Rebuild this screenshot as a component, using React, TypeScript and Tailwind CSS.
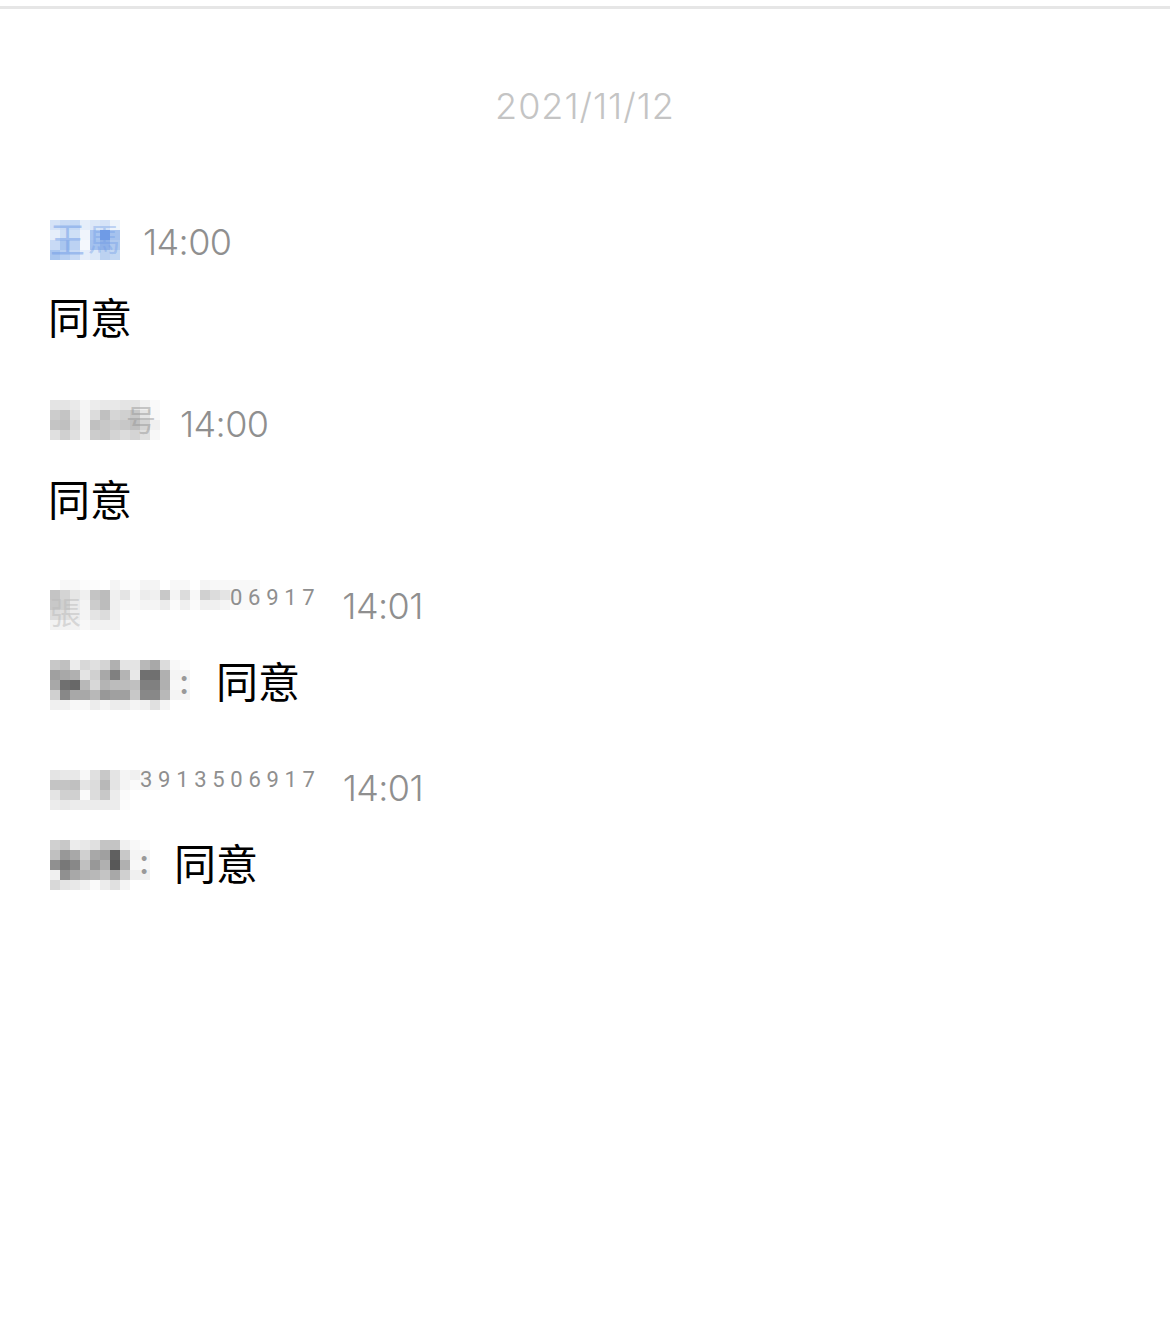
const fontStack = '[font-family:Inter,"Noto_Sans_CJK_SC",sans-serif]';

// mosaic cells are 10px squares, values are hex colours (two digits = gray)
type Mosaic = string[];

function toColor(v: string): string {
  return v.length === 2 ? `#${v}${v}${v}` : `#${v}`;
}

function PixelBlock({ rows }: { rows: Mosaic }) {
  return (
    <div className="flex shrink-0 flex-col blur-[0.4px]">
      {rows.map((row, y) => (
        <div key={y} className="flex">
          {row.split(' ').map((v, x) => (
            <span key={x} className="size-[10px]" style={{ backgroundColor: toColor(v) }} />
          ))}
        </div>
      ))}
    </div>
  );
}

const NAME_BLUE: Mosaic = [
  'd5e3f7 c9dbf5 c5d9f5 e6eefa dce8f8 d5e3f7 eef4fb',
  'e6eefa cfe0f6 cfe0f6 f0f5fc a9c5f0 6f9be6 a5c2ee',
  'c8daf5 a9c6ef bcd2f3 f5f8fd a3c1ee 8fb1e8 b0c9ee',
  'a9c6ef b8d0f2 c8daf5 e6eefa dce8f8 bcd2f1 c4d8f3',
];

const NAME_GRAY: Mosaic = [
  'e4 e4 ea f5 ec e8 e8 e4 e4 f0 fa',
  'cc c4 e4 f5 dc c0 d6 d0 c8 e4 f8',
  'c4 c0 dc f5 c0 c8 cc c8 c0 d4 f0',
  'e0 d0 e0 f5 cc c8 d4 dc d4 e0 f8',
];

const NAME_LONG: Mosaic = [
  'ff f8 f8 fc fc ff f4 fc fc f4 f4 ff f8 f8 ff f4 f8 f8 f8 f8 f8',
  'c4 d4 e6 f0 c4 bc f0 e4 f8 ec f0 c8 f4 dc f8 d0 dc e4 f0 f8 f8',
  'c8 d0 ea f4 cc bc f0 f8 f8 f4 f4 ec fa f0 fa f0 f0 f4 fa fa fa',
  'dc e0 ec f4 e4 dc f0 ff ff ff ff ff ff ff ff ff ff ff ff ff ff',
  'f2 f2 f2 f8 f2 f2 f2 ff ff ff ff ff ff ff ff ff ff ff ff ff ff',
];

const NAME_SHORT: Mosaic = [
  'e4 e8 e8 f8 e0 c8 e4 f4 f0 f8 fc',
  'c4 c4 c0 e4 dc b8 e4 f4 fa fa fa',
  'e4 d0 d0 fa dc c8 ec fa ff ff ff',
  'ec e8 ec ec ec ec ec fc ff ff ff',
];

const SENDER_A: Mosaic = [
  'c8 c0 ec d8 e0 d4 b0 e4 e4 b8 a8 dc f8 fc',
  'a0 a8 b0 e4 d0 a8 80 b4 e8 70 70 b0 f4 f4',
  'a8 70 68 b8 d8 b4 bc bc c0 80 80 b0 f8 f8',
  'd0 88 a8 a8 b8 98 a0 a0 c8 88 88 b8 f4 f4',
  'f0 f0 f8 f8 ec f4 ec ec f4 f0 e0 f4 ff ff',
];

const SENDER_B: Mosaic = [
  'd0 c8 ec e8 e0 c4 c4 f0 f8 fc',
  'c0 98 a8 d0 a8 a0 60 c8 f4 f4',
  '90 78 88 c0 98 b0 58 b0 f8 f8',
  'f0 90 a8 b4 b8 c4 a8 d0 f0 f0',
  'd8 e4 e8 f0 fa ec e0 f4 ff ff',
];

function Time({ value }: { value: string }) {
  return (
    <span className="mt-[1px] text-[36px] leading-[40px] font-light tracking-[-0.6px] text-[#8f8f8f]">
      {value}
    </span>
  );
}

function Agree() {
  return <p className="-mx-[2px] text-[42px] leading-[40px] text-black">同意</p>;
}

function Sender({ rows, className }: { rows: Mosaic; className: string }) {
  return (
    <div className={`relative shrink-0 ${className}`}>
      <PixelBlock rows={rows} />
      <span className="absolute right-[1px] top-[2px] w-[10px] text-center text-[34px] leading-[40px] font-medium text-[#999]">
        :
      </span>
    </div>
  );
}

export default function App() {
  return (
    <div className={`h-[1329px] w-[1170px] bg-white ${fontStack}`}>
      <div className="pt-[6px]">
        <div className="h-[3px] bg-[#e6e6e6]" />
      </div>

      <div className="mt-[75px] text-center text-[36px] leading-[44px] font-light tracking-[0.95px] text-[#c4c4c4]">
        2021/11/12
      </div>

      <div className="mt-[93px] flex flex-col gap-[64px] pl-[50px]">
        <div className="flex flex-col gap-[38px]">
          <div className="flex h-[40px] items-center gap-[23px]">
            <div className="relative -mt-[2px]">
              <PixelBlock rows={NAME_BLUE} />
              <span className="absolute left-0 top-0 text-[35px] leading-[40px] text-[#6f9be6]/50">
                王
              </span>
              <span className="absolute right-0 top-0 text-[32px] leading-[40px] text-[#6f9be6]/40">
                馬
              </span>
            </div>
            <Time value="14:00" />
          </div>
          <Agree />
        </div>

        <div className="flex flex-col gap-[38px]">
          <div className="flex h-[40px] items-center gap-[20px]">
            <div className="relative mb-[6px]">
              <PixelBlock rows={NAME_GRAY} />
              <span className="absolute right-[4px] top-0 text-[30px] leading-[40px] text-[#999]/50">
                号
              </span>
            </div>
            <Time value="14:00" />
          </div>
          <Agree />
        </div>

        <div className="flex flex-col gap-[38px]">
          <div className="flex h-[40px] items-center gap-[22px]">
            <div className="relative flex shrink-0 items-start">
              <PixelBlock rows={NAME_LONG} />
              <span className="absolute left-0 top-[15px] text-[31px] leading-[36px] text-[#bbb]/50">
                張
              </span>
              <span className="relative mt-[5px] -ml-[30px] font-['Roboto'] text-[22px] leading-[26px] tracking-[5.7px] text-[#8f8f8f]">
                06917
              </span>
            </div>
            <Time value="14:01" />
          </div>
          <div className="flex items-center gap-[28px]">
            <Sender rows={SENDER_A} className="-mt-[3px] -mb-[7px]" />
            <Agree />
          </div>
        </div>

        <div className="flex flex-col gap-[38px]">
          <div className="flex h-[40px] items-center gap-[22px]">
            <div className="mt-[6px] flex shrink-0 items-start">
              <PixelBlock rows={NAME_SHORT} />
              <span className="relative -mt-[3px] -ml-[20px] font-['Roboto'] text-[22px] leading-[26px] tracking-[5.7px] text-[#8f8f8f]">
                3913506917
              </span>
            </div>
            <Time value="14:01" />
          </div>
          <div className="flex items-center gap-[26px]">
            <Sender rows={SENDER_B} className="-mt-[5px] -mb-[5px]" />
            <Agree />
          </div>
        </div>
      </div>
    </div>
  );
}
